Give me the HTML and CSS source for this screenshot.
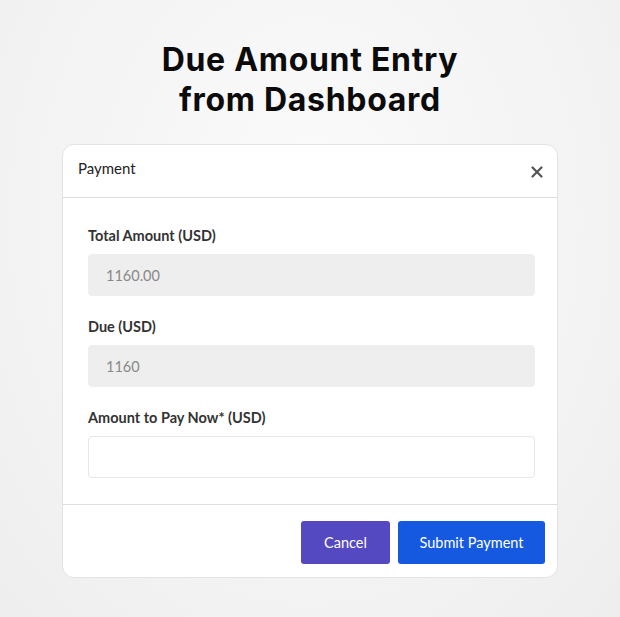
FILE: index.html
```html
<!DOCTYPE html>
<html lang="en">
<head>
    <meta charset="UTF-8">
    <meta name="viewport" content="width=device-width, initial-scale=1.0">
    <title>Due Amount Entry from Dashboard</title>
    <link rel="stylesheet" href="styles.css">
</head>
<body>
    <div class="page">
        <h1 class="page-title">Due Amount Entry<br>from Dashboard</h1>
        <div class="modal">
            <div class="modal-header">
                <span class="modal-title">Payment</span>
                <button type="button" class="modal-close" aria-label="Close">
                    <svg width="12" height="12" viewBox="0 0 12 12">
                        <path d="M1.5 1.5 L10.5 10.5 M10.5 1.5 L1.5 10.5" stroke="#555" stroke-width="2.2" stroke-linecap="round"/>
                    </svg>
                </button>
            </div>
            <form class="modal-body">
                <div class="field">
                    <label for="totalAmount">Total Amount (USD)</label>
                    <input type="text" id="totalAmount" value="1160.00" disabled>
                </div>
                <div class="field">
                    <label for="dueAmount">Due (USD)</label>
                    <input type="text" id="dueAmount" value="1160" disabled>
                </div>
                <div class="field">
                    <label for="payNow">Amount to Pay Now* (USD)</label>
                    <input type="number" id="payNow" name="payNow">
                </div>
            </form>
            <div class="modal-footer">
                <button type="button" class="btn btn-cancel">Cancel</button>
                <button type="button" class="btn btn-submit">Submit Payment</button>
            </div>
        </div>
    </div>
</body>
</html>
```

FILE: styles.css
```css
html, body {
    margin: 0;
    height: 100%;
}

body {
    background: #f0f0f1;
    background: radial-gradient(ellipse at 50% 35%, #fbfbfb 0%, #f4f4f5 55%, #eeeeef 100%);
    font-family: Lato, "Open Sans", sans-serif;
    color: #222;
}

.page {
    padding-top: 40px;
}

.page-title {
    margin: 0 0 24px;
    text-align: center;
    font-family: Inter, "Noto Sans", sans-serif;
    font-size: 32px;
    font-weight: 700;
    line-height: 40px;
    letter-spacing: 0.7px;
    color: #0b0b0b;
}

.modal {
    width: 494px;
    margin-left: 62px;
    background: #fff;
    border: 1px solid #e3e3e6;
    border-radius: 12px;
}

.modal-header {
    display: flex;
    align-items: center;
    justify-content: space-between;
    height: 52px;
    padding: 0 14px 0 15px;
    border-bottom: 1px solid #dedee0;
}

.modal-title {
    font-size: 15px;
    color: #222;
    margin-top: -6px;
}

.modal-close {
    background: none;
    border: none;
    padding: 0;
    width: 12px;
    height: 12px;
    display: flex;
    margin-top: 2px;
}

.modal-body {
    padding: 28px 22px 26px 25px;
    margin: 0;
}

.field + .field {
    margin-top: 21px;
}

.field label {
    display: block;
    font-size: 14.5px;
    font-weight: 700;
    color: #333;
    line-height: 20px;
    margin-bottom: 8px;
}

.field input {
    box-sizing: border-box;
    width: 100%;
    height: 42px;
    padding: 0 17px;
    border: 1px solid #e6e6ea;
    border-radius: 4px;
    font-family: Lato, sans-serif;
    font-size: 14.5px;
    color: #222;
    background: #fff;
}

.field input:disabled {
    background: #eeeeee;
    border-color: #eeeeee;
    color: #888;
}

.modal-footer {
    display: flex;
    justify-content: flex-end;
    gap: 8px;
    padding: 16px 12px 13px;
    border-top: 1px solid #dedee0;
}

.btn {
    height: 43px;
    border: none;
    border-radius: 3px;
    font-family: Lato, sans-serif;
    font-size: 14.5px;
    color: #fff;
    padding: 0;
    white-space: nowrap;
}

.btn-cancel {
    background: #5549c2;
    width: 89px;
}

.btn-submit {
    background: #1559e0;
    width: 147px;
}
```
